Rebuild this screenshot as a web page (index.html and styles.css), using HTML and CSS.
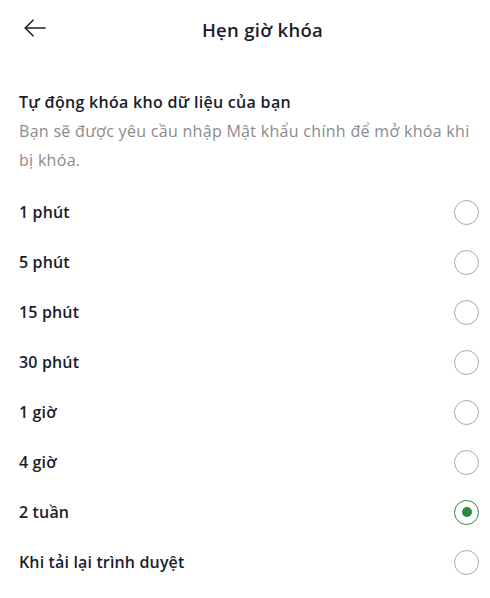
FILE: index.html
```html
<!DOCTYPE html>
<html lang="vi">
<head>
<meta charset="utf-8">
<title>Hẹn giờ khóa</title>
<link rel="stylesheet" href="styles.css">
</head>
<body>
<div class="page">
  <header class="header">
    <button class="back" aria-label="Quay lại">
      <svg width="22" height="18" viewBox="0 0 22 18" fill="none" stroke="#1b1d2b" stroke-width="1.6" stroke-linecap="round" stroke-linejoin="round">
        <path d="M21 9H1.5"/>
        <path d="M9 1.2L1.2 9L9 16.8"/>
      </svg>
    </button>
    <h1 class="title">Hẹn giờ khóa</h1>
  </header>

  <section class="intro">
    <h2 class="intro-title">Tự động khóa kho dữ liệu của bạn</h2>
    <p class="intro-text">Bạn sẽ được yêu cầu nhập Mật khẩu chính để mở khóa khi bị khóa.</p>
  </section>

  <ul class="options">
    <li class="option"><span class="label">1 phút</span><span class="radio"></span></li>
    <li class="option"><span class="label">5 phút</span><span class="radio"></span></li>
    <li class="option"><span class="label">15 phút</span><span class="radio"></span></li>
    <li class="option"><span class="label">30 phút</span><span class="radio"></span></li>
    <li class="option"><span class="label">1 giờ</span><span class="radio"></span></li>
    <li class="option"><span class="label">4 giờ</span><span class="radio"></span></li>
    <li class="option"><span class="label">2 tuần</span><span class="radio radio-checked"></span></li>
    <li class="option"><span class="label">Khi tải lại trình duyệt</span><span class="radio"></span></li>
  </ul>
</div>
</body>
</html>
```

FILE: styles.css
```css
* {
  box-sizing: border-box;
}

html, body {
  margin: 0;
  padding: 0;
  background: #ffffff;
}

body {
  font-family: "Open Sans", "Noto Sans", "Liberation Sans", sans-serif;
  color: #1b1d2b;
}

.page {
  width: 490px;
}

.header {
  display: grid;
  grid-template-columns: 52px 1fr;
  align-items: center;
  padding: 18px 0 16px 0;
}

.back {
  display: flex;
  align-items: center;
  justify-content: center;
  width: 35px;
  height: 24px;
  margin-left: 17px;
  padding: 0;
  border: 0;
  background: transparent;
  position: relative;
  top: -2px;
}

.title {
  margin: 0;
  padding-right: 17px;
  text-align: center;
  font-size: 18.5px;
  line-height: 24px;
  letter-spacing: 0.3px;
  font-weight: 600;
  color: #1b1d2b;
}

.intro {
  padding: 0 11px 0 19px;
  margin-top: 32px;
}

.intro-title {
  margin: 0;
  font-size: 16px;
  line-height: 24px;
  letter-spacing: 0.3px;
  font-weight: 600;
}

.intro-text {
  margin: 3px 0 0 0;
  font-size: 16px;
  line-height: 29px;
  letter-spacing: 0.3px;
  color: #8a8a8e;
}

.options {
  list-style: none;
  margin: 12px 0 0 0;
  padding: 0 11px 0 19px;
}

.option {
  display: flex;
  align-items: center;
  justify-content: space-between;
  height: 50px;
}

.label {
  font-size: 16px;
  font-weight: 600;
  letter-spacing: 0.15px;
  color: #1b1d2b;
}

.radio {
  width: 25px;
  height: 25px;
  border-radius: 50%;
  border: 1.5px solid #a9a9a9;
  display: flex;
  align-items: center;
  justify-content: center;
}

.radio-checked {
  border-color: #2b8a3e;
}

.radio-checked::after {
  content: "";
  width: 10px;
  height: 10px;
  border-radius: 50%;
  background: #2b8a3e;
}
```
